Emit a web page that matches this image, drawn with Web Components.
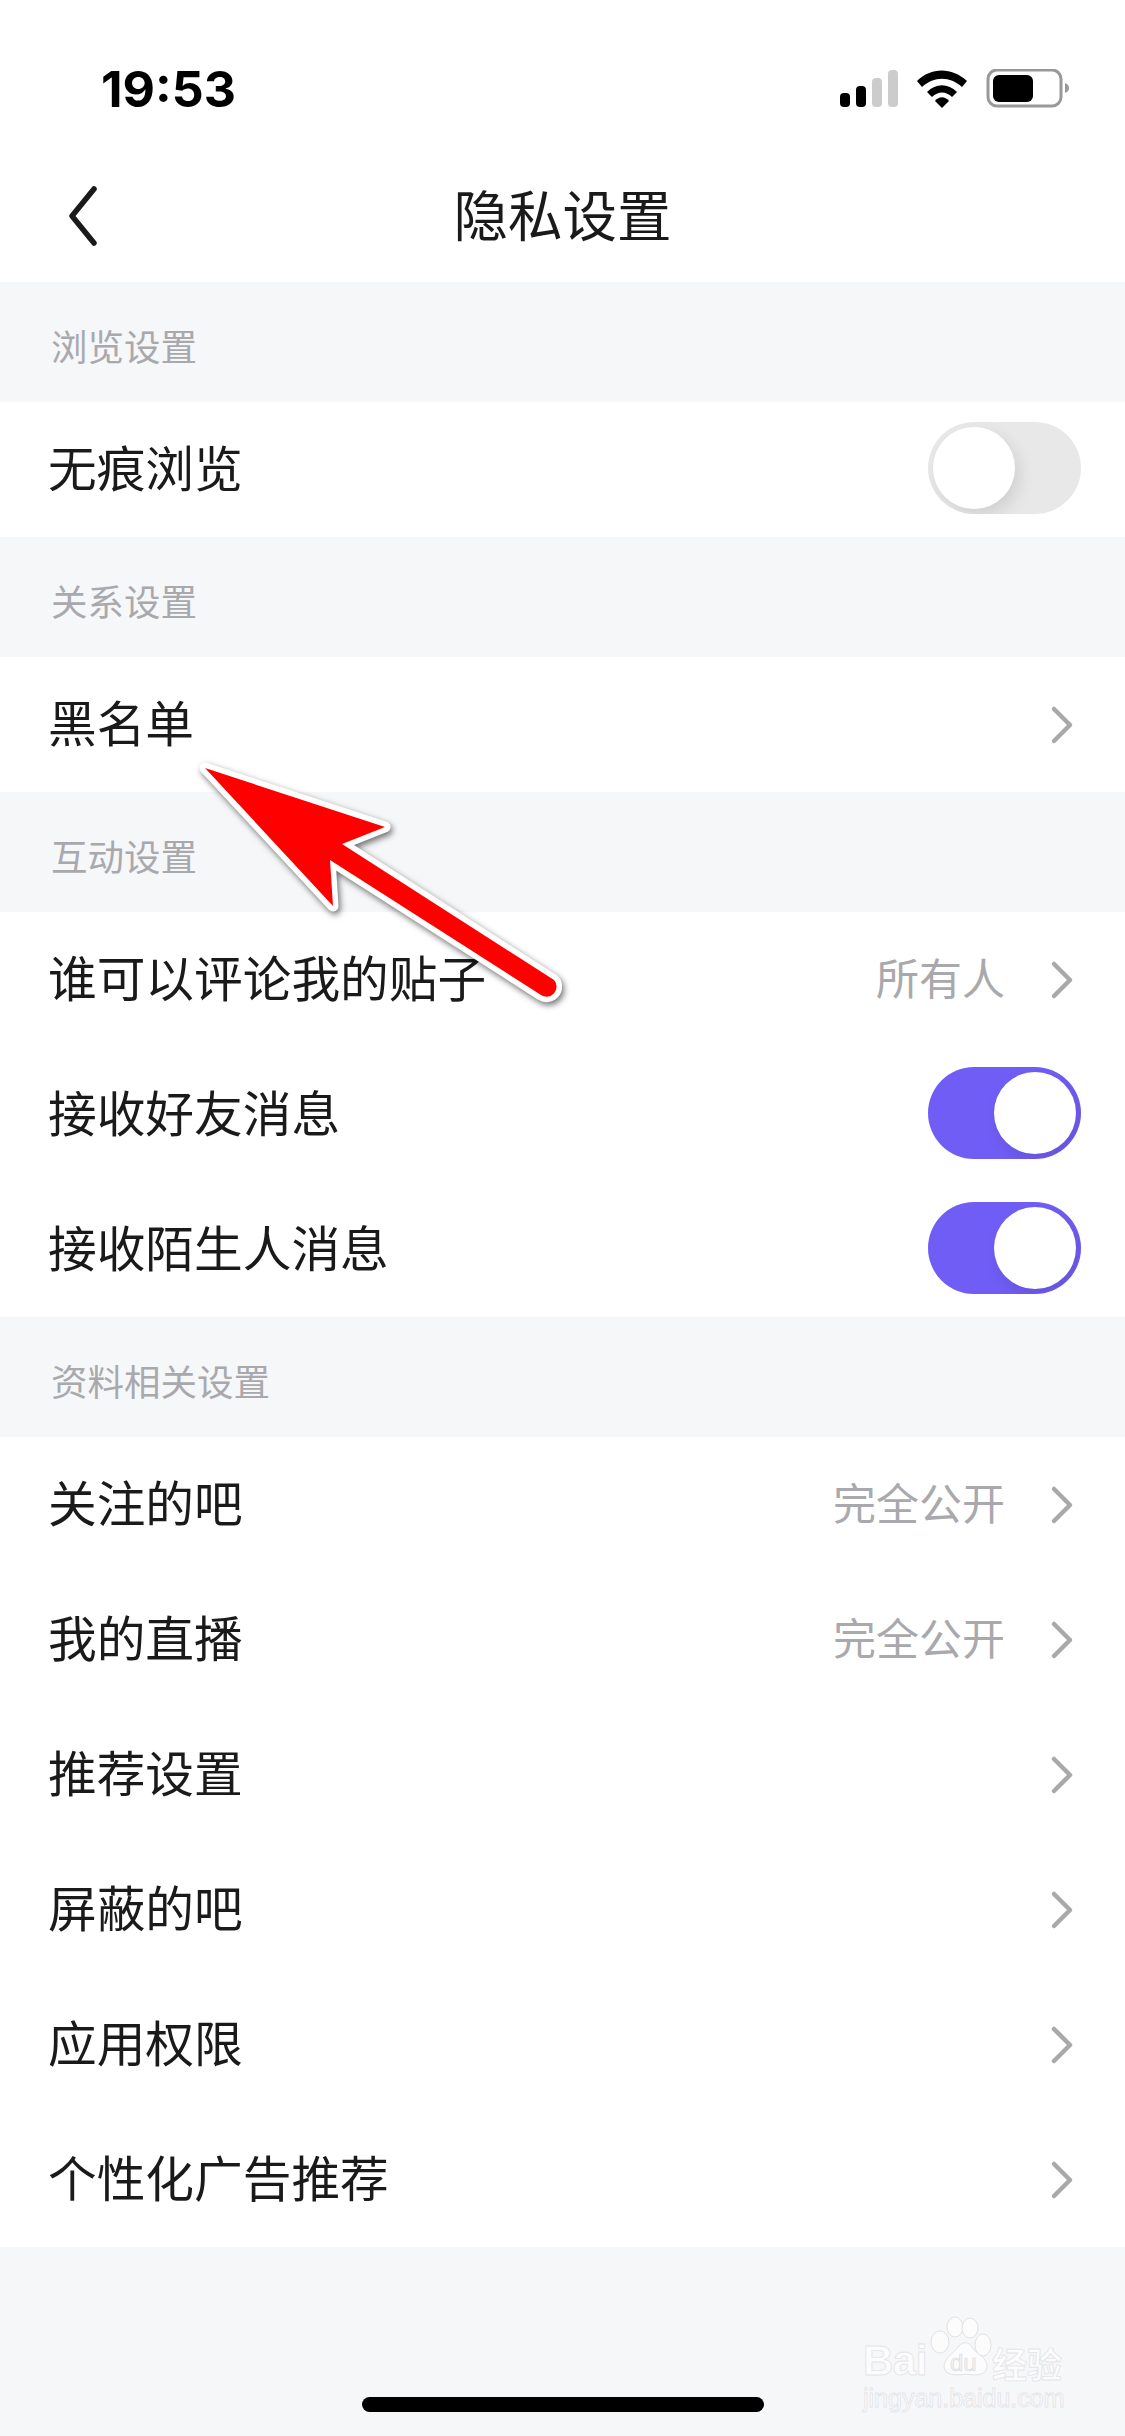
<!DOCTYPE html>
<html lang="zh">
<head>
<meta charset="utf-8">
<title>隐私设置</title>
<style>
  html, body { margin: 0; padding: 0; }
  body {
    width: 1125px;
    height: 2436px;
    overflow: hidden;
    background: #f6f7f9;
    font-family: "Noto Sans CJK SC", "Noto Sans", sans-serif;
  }
</style>
</head>
<body>
<privacy-page>
  <status-bar time="19:53"></status-bar>
  <nav-bar heading="隐私设置"></nav-bar>

  <set-section heading="浏览设置">
    <set-row label="无痕浏览"><set-toggle></set-toggle></set-row>
  </set-section>
  <set-section heading="关系设置">
    <set-row label="黑名单" link></set-row>
  </set-section>
  <set-section heading="互动设置">
    <set-row label="谁可以评论我的贴子" value="所有人" link></set-row>
    <set-row label="接收好友消息"><set-toggle on></set-toggle></set-row>
    <set-row label="接收陌生人消息"><set-toggle on></set-toggle></set-row>
  </set-section>
  <set-section heading="资料相关设置">
    <set-row label="关注的吧" value="完全公开" link></set-row>
    <set-row label="我的直播" value="完全公开" link></set-row>
    <set-row label="推荐设置" link></set-row>
    <set-row label="屏蔽的吧" link></set-row>
    <set-row label="应用权限" link></set-row>
    <set-row label="个性化广告推荐" link></set-row>
  </set-section>

  <home-bar></home-bar>
  <baidu-mark></baidu-mark>
  <red-arrow></red-arrow>
</privacy-page>

<script>
	// page shell, overlays are placed against this box
	customElements.define('privacy-page',
		class extends HTMLElement {
			constructor() {
				super();
				this.attachShadow({ mode: 'open' }).innerHTML = `
        <style>
          :host {
            display: block;
            position: relative;
            width: 1125px;
            height: 2436px;
            background: #f6f7f9;
            overflow: hidden;
          }
        </style>
        <slot></slot>
      `;
			}
		}
	);

	customElements.define('status-bar',
		class extends HTMLElement {
			constructor() {
				super();
				this.attachShadow({ mode: 'open' }).innerHTML = `
        <style>
          :host {
            display: flex;
            justify-content: space-between;
            align-items: flex-start;
            box-sizing: border-box;
            height: 150px;
            padding: 69px 56px 0 101px;
            background: #fff;
          }
          .time {
            padding-top: 1px;
            font: 700 50px/38px Inter, Roboto, "Liberation Sans", sans-serif;
            color: #000;
          }
          svg { display: block; }
        </style>
        <div class="time"></div>
        <svg width="229" height="39" viewBox="0 0 229 39">
          <rect x="0" y="24" width="10" height="14" rx="4" fill="#000"/>
          <rect x="16" y="17" width="10" height="21" rx="4" fill="#000"/>
          <rect x="32" y="9" width="10" height="29" rx="4" fill="#ccc"/>
          <rect x="48" y="1" width="10" height="37" rx="4" fill="#ccc"/>
          <g fill="#000">
            <path d="M77 12 C91 -2 112 -2 127 12 L122 18 C110 7 94 7 82 18 Z"/>
            <path d="M87 23 C96 14 108 14 117 23 L112 28 C106 22 98 22 92 28 Z"/>
            <path d="M95 32 C99 27 105 27 109 32 L102 39 Z"/>
          </g>
          <rect x="148" y="1" width="73" height="36" rx="9" fill="none" stroke="#999" stroke-width="3"/>
          <rect x="153" y="6" width="40" height="27" rx="6" fill="#000"/>
          <path d="M225 14 C228 15 229 17 229 19 C229 21 228 23 225 24 Z" fill="#999"/>
        </svg>
      `;
				this.shadowRoot.querySelector('.time').textContent = this.getAttribute('time');
			}
		}
	);

	customElements.define('nav-bar',
		class extends HTMLElement {
			constructor() {
				super();
				this.attachShadow({ mode: 'open' }).innerHTML = `
        <style>
          :host {
            display: grid;
            grid-template-columns: 1fr auto 1fr;
            align-items: center;
            height: 132px;
            background: #fff;
          }
          .back { padding-left: 67px; display: flex; }
          h1 {
            margin: 0;
            padding-bottom: 6px;
            font: 400 54.5px/1 "Noto Sans CJK SC", sans-serif;
            color: #1a1a1a;
          }
        </style>
        <div class="back">
          <svg width="32" height="60" viewBox="0 0 32 60">
            <path d="M27 3 L5 30 L27 57" fill="none" stroke="#1a1a1a" stroke-width="5.5" stroke-linecap="round" stroke-linejoin="round"/>
          </svg>
        </div>
        <h1></h1>
        <div></div>
      `;
				this.shadowRoot.querySelector('h1').textContent = this.getAttribute('heading');
			}
		}
	);

	customElements.define('set-section',
		class extends HTMLElement {
			constructor() {
				super();
				this.attachShadow({ mode: 'open' }).innerHTML = `
        <style>
          :host { display: block; }
          .head {
            display: flex;
            align-items: center;
            box-sizing: border-box;
            height: 120px;
            padding: 8px 0 0 51px;
            font: 400 36.5px/1 "Noto Sans CJK SC", sans-serif;
            color: #a9a9ad;
          }
          .rows { background: #fff; }
        </style>
        <div class="head"></div>
        <div class="rows"><slot></slot></div>
      `;
				this.shadowRoot.querySelector('.head').textContent = this.getAttribute('heading');
			}
		}
	);

	customElements.define('set-row',
		class extends HTMLElement {
			constructor() {
				super();
				const link = this.hasAttribute('link');
				const value = this.getAttribute('value');
				this.attachShadow({ mode: 'open' }).innerHTML = `
        <style>
          :host {
            display: flex;
            align-items: center;
            box-sizing: border-box;
            height: 135px;
            padding: 0 ${link ? 50 : 44}px 0 48px;
            background: #fff;
          }
          .label {
            flex: 1;
            padding-bottom: 6px;
            font: 400 48.7px/1 "Noto Sans CJK SC", sans-serif;
            color: #1a1a1a;
          }
          .value {
            margin-right: 45px;
            padding-bottom: 6px;
            font: 400 43px/1 "Noto Sans CJK SC", sans-serif;
            color: #a9a9ad;
          }
          svg { display: block; }
        </style>
        <div class="label"></div>
        ${value ? '<div class="value"></div>' : ''}
        <slot></slot>
        ${link ? `<svg width="25" height="40" viewBox="0 0 25 40">
          <path d="M4 4 L20 20 L4 36" fill="none" stroke="#a9a9a9" stroke-width="4.5" stroke-linecap="round" stroke-linejoin="round"/>
        </svg>` : ''}
      `;
				this.shadowRoot.querySelector('.label').textContent = this.getAttribute('label');
				if (value) this.shadowRoot.querySelector('.value').textContent = value;
			}
		}
	);

	customElements.define('set-toggle',
		class extends HTMLElement {
			constructor() {
				super();
				this.attachShadow({ mode: 'open' }).innerHTML = `
        <style>
          :host {
            display: flex;
            align-items: center;
            box-sizing: border-box;
            width: 153px;
            height: 92px;
            margin-bottom: 4px;
            padding: 0 5px;
            border-radius: 46px;
            background: #e8e8e8;
            overflow: hidden;
          }
          :host([on]) {
            justify-content: flex-end;
            background: #705df5;
          }
          .knob {
            width: 82px;
            height: 82px;
            border-radius: 50%;
            background: #fff;
            box-shadow: 5px 7px 16px rgba(0, 0, 0, .1);
          }
        </style>
        <div class="knob"></div>
      `;
			}
		}
	);

	customElements.define('home-bar',
		class extends HTMLElement {
			constructor() {
				super();
				this.attachShadow({ mode: 'open' }).innerHTML = `
        <style>
          :host {
            display: block;
            width: 402px;
            height: 15px;
            margin: 150px 0 0 362px;
            border-radius: 8px;
            background: #000;
          }
        </style>
      `;
			}
		}
	);

	// watermark lying over the page bottom
	customElements.define('baidu-mark',
		class extends HTMLElement {
			constructor() {
				super();
				this.attachShadow({ mode: 'open' }).innerHTML = `
        <style>
          :host {
            position: absolute;
            left: 863px;
            top: 2316px;
            width: 204px;
            height: 96px;
            color: #fcfcfd;
            -webkit-text-stroke: .8px #e4e4e6;
          }
          .top {
            display: flex;
            align-items: flex-end;
            height: 66px;
          }
          .bai {
            width: 66px;
            font: 700 42px/42px "Liberation Sans", sans-serif;
            letter-spacing: -.5px;
          }
          .cn {
            margin: 0 0 1px -1px;
            font: 700 35px/36px "Noto Sans CJK SC", sans-serif;
          }
          svg { display: block; }
          svg text {
            font: 400 24px "Liberation Sans", sans-serif;
            -webkit-text-stroke: 0;
          }
          .url {
            margin-top: 1px;
            font: 400 25px/30px "Liberation Sans", sans-serif;
          }
        </style>
        <div class="top">
          <div class="bai">Bai</div>
          <svg width="64" height="66" viewBox="0 0 64 66" fill="#fcfcfd" stroke="#e2e2e4" stroke-width="1">
            <ellipse cx="26" cy="11" rx="8" ry="10"/>
            <ellipse cx="41" cy="12" rx="8" ry="10"/>
            <ellipse cx="11" cy="26" rx="9" ry="11"/>
            <ellipse cx="54" cy="29" rx="8" ry="11"/>
            <path d="M15 50 C16 41 26 36 30 30 C34 25 40 26 43 31 C47 38 58 41 58 50 C58 59 48 60 37 58 C26 60 15 59 15 50 Z"/>
            <text x="21" y="55" fill="#f3f3f5" stroke="#dcdcde" stroke-width=".7">du</text>
          </svg>
          <div class="cn">经验</div>
        </div>
        <div class="url">jingyan.baidu.com</div>
      `;
			}
		}
	);

	// annotation arrow drawn on top of the screenshot
	customElements.define('red-arrow',
		class extends HTMLElement {
			constructor() {
				super();
				this.attachShadow({ mode: 'open' }).innerHTML = `
        <style>
          :host {
            position: absolute;
            left: 190px;
            top: 750px;
            width: 380px;
            height: 260px;
            pointer-events: none;
          }
          svg {
            display: block;
            overflow: visible;
            filter: drop-shadow(2px 3px 3px rgba(0, 0, 0, .55));
          }
        </style>
        <svg width="380" height="260" viewBox="190 750 380 260">
          <path d="M205 768 L385 827 L342 844 L554 980 A10 10 0 0 1 541 995 L330 860 L333 906 Z"
            fill="#f00" stroke="#fff" stroke-width="11" stroke-linejoin="round" paint-order="stroke"/>
        </svg>
      `;
			}
		}
	);
</script>
</body>
</html>
